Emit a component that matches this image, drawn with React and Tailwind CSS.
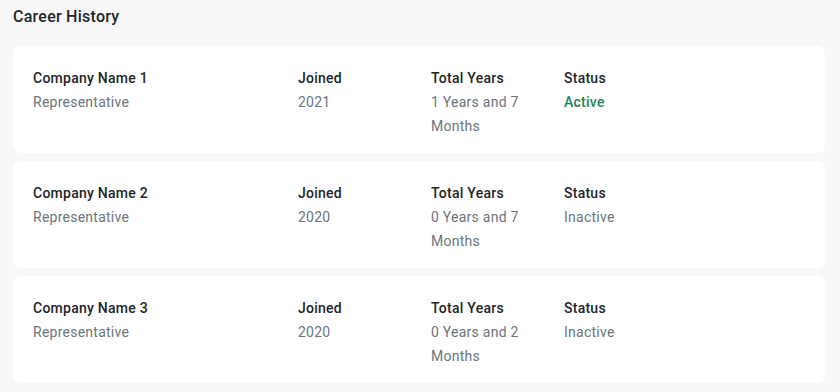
import React from "react";

const jobs = [
  { company: "Company Name 1", role: "Representative", joined: "2021", total: "1 Years and 7 Months", status: "Active" },
  { company: "Company Name 2", role: "Representative", joined: "2020", total: "0 Years and 7 Months", status: "Inactive" },
  { company: "Company Name 3", role: "Representative", joined: "2020", total: "0 Years and 2 Months", status: "Inactive" },
];

const Field = ({ label, value, className = "", valueClass = "text-[#6c757d]" }) => (
  <div className={className}>
    <p className="font-medium text-[#212529]">{label}</p>
    <p className={valueClass}>{value}</p>
  </div>
);

export default function App() {
  return (
    <div
      className="min-h-[392px] w-[840px] bg-[#f8f8f9] pl-[13px] pr-[15px] pt-[6px] text-[14px] leading-6 tracking-[0.25px]"
      style={{ fontFamily: "Roboto, 'Liberation Sans', sans-serif" }}
    >
      {/* Section heading */}
      <h2 className="text-[16px] font-medium leading-[22px] text-[#212529]">Career History</h2>

      <div className="mt-[18px] flex flex-col gap-2">
        {jobs.map((job) => (
          <div key={job.company} className="flex rounded-lg bg-white px-5 pb-[15px] pt-5">
            <Field label={job.company} value={job.role} className="w-[265px]" />
            <Field label="Joined" value={job.joined} className="w-[133px]" />
            <Field label="Total Years" value={job.total} className="w-[133px] pr-[30px]" />
            <Field
              label="Status"
              value={job.status}
              className="w-[133px]"
              valueClass={job.status === "Active" ? "font-medium text-[#198754]" : "text-[#6c757d]"}
            />
          </div>
        ))}
      </div>
    </div>
  );
}
